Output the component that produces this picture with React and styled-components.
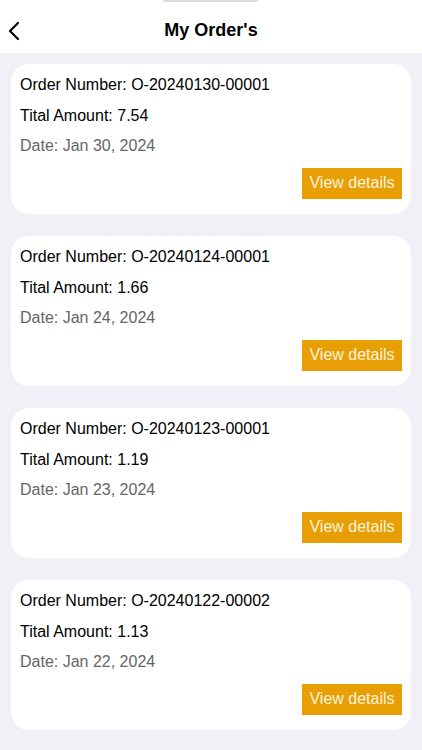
import React from 'react';
import styled, { createGlobalStyle } from 'styled-components';

const GlobalStyle = createGlobalStyle`
  body {
    margin: 0;
    background: #f1f0f6;
    font-family: 'Liberation Sans', Arial, sans-serif;
  }
`;

const Page = styled.div`
  width: 422px;
  min-height: 750px;
  background: #f1f0f6;
`;

const Header = styled.header`
  position: relative;
  height: 53px;
  background: #fff;
  display: flex;
  align-items: center;
  justify-content: center;
`;

const TopBar = styled.div`
  position: absolute;
  top: 0;
  left: 163px;
  width: 95px;
  height: 2px;
  background: #dcdcdc;
  border-radius: 0 0 2px 2px;
`;

const Back = styled.button`
  position: absolute;
  left: 6px;
  top: 21px;
  border: 0;
  background: none;
  padding: 0;
  display: flex;
`;

const Title = styled.h1`
  margin: 0;
  padding-top: 7px;
  font-size: 18px;
  font-weight: 700;
  color: #000;
`;

const List = styled.div`
  display: flex;
  flex-direction: column;
  gap: 22px;
  padding: 11px 11px 20px;
`;

const Card = styled.div`
  height: 150px;
  box-sizing: border-box;
  background: #fff;
  border-radius: 18px;
  padding: 12px 9px 15px;
  display: flex;
  flex-direction: column;
`;

const Line = styled.div`
  font-size: 16px;
  line-height: 18px;
  height: 31.5px;
  color: ${p => (p.muted ? '#666' : '#000')};
`;

const Action = styled.button`
  align-self: flex-end;
  margin-top: auto;
  width: 100px;
  height: 32px;
  border: 0;
  background: #e89e05;
  color: #fdf4de;
  font-family: inherit;
  font-size: 16px;
  padding: 0;
`;

const orders = [
  { no: 'O-20240130-00001', amount: '7.54', date: 'Jan 30, 2024' },
  { no: 'O-20240124-00001', amount: '1.66', date: 'Jan 24, 2024' },
  { no: 'O-20240123-00001', amount: '1.19', date: 'Jan 23, 2024' },
  { no: 'O-20240122-00002', amount: '1.13', date: 'Jan 22, 2024' },
];

export default function App() {
  return (
    <Page>
      <GlobalStyle />
      <Header>
        <TopBar />
        <Back aria-label="back">
          <svg width="18" height="20" viewBox="0 0 18 20" fill="none">
            <path d="M12 2L4 10L12 18" stroke="#000" strokeWidth="2.2" strokeLinecap="round" strokeLinejoin="round" />
          </svg>
        </Back>
        <Title>My Order's</Title>
      </Header>
      <List>
        {orders.map(o => (
          <Card key={o.no}>
            <Line>Order Number: {o.no}</Line>
            <Line>Tital Amount: {o.amount}</Line>
            <Line muted>Date: {o.date}</Line>
            <Action>View details</Action>
          </Card>
        ))}
      </List>
    </Page>
  );
}
